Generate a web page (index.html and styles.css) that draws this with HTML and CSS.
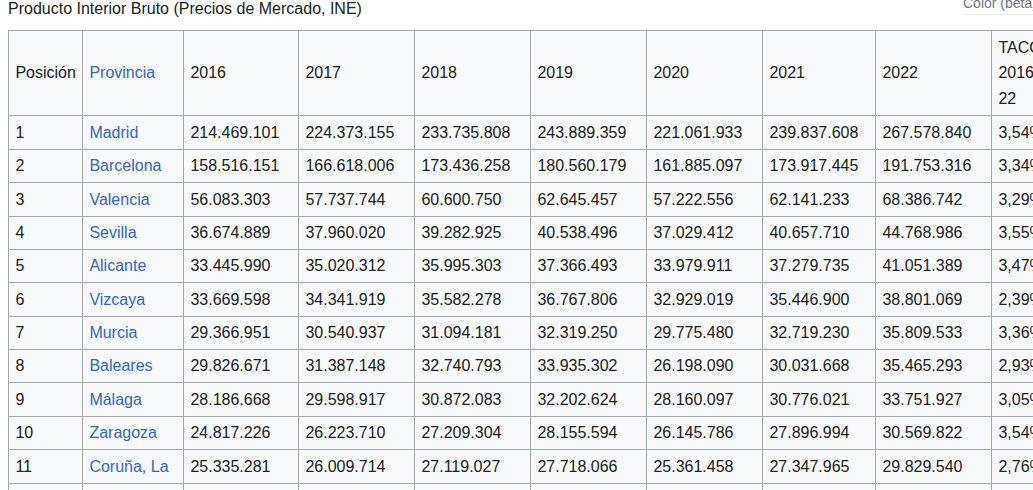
FILE: index.html
```html
<!DOCTYPE html>
<html lang="es">
<head>
<meta charset="utf-8">
<title>Producto Interior Bruto</title>
<link rel="stylesheet" href="styles.css">
</head>
<body>
<div class="topbar">
  <div class="caption">Producto Interior Bruto (Precios de Mercado, INE)</div>
  <div class="color-select">Color (beta)</div>
</div>
<table class="wikitable">
  <colgroup>
    <col class="c-pos"><col class="c-prov"><col class="c-y1"><col class="c-y"><col class="c-y"><col class="c-y"><col class="c-y"><col class="c-y2"><col class="c-y"><col class="c-tacc">
  </colgroup>
  <thead>
    <tr><th>Posición</th><th><a href="#">Provincia</a></th><th>2016</th><th>2017</th><th>2018</th><th>2019</th><th>2020</th><th>2021</th><th>2022</th><th>TACC 2016-22</th></tr>
  </thead>
  <tbody>
    <tr><td>1</td><td><a href="#">Madrid</a></td><td>214.469.101</td><td>224.373.155</td><td>233.735.808</td><td>243.889.359</td><td>221.061.933</td><td>239.837.608</td><td>267.578.840</td><td>3,54%</td></tr>
    <tr><td>2</td><td><a href="#">Barcelona</a></td><td>158.516.151</td><td>166.618.006</td><td>173.436.258</td><td>180.560.179</td><td>161.885.097</td><td>173.917.445</td><td>191.753.316</td><td>3,34%</td></tr>
    <tr><td>3</td><td><a href="#">Valencia</a></td><td>56.083.303</td><td>57.737.744</td><td>60.600.750</td><td>62.645.457</td><td>57.222.556</td><td>62.141.233</td><td>68.386.742</td><td>3,29%</td></tr>
    <tr><td>4</td><td><a href="#">Sevilla</a></td><td>36.674.889</td><td>37.960.020</td><td>39.282.925</td><td>40.538.496</td><td>37.029.412</td><td>40.657.710</td><td>44.768.986</td><td>3,55%</td></tr>
    <tr><td>5</td><td><a href="#">Alicante</a></td><td>33.445.990</td><td>35.020.312</td><td>35.995.303</td><td>37.366.493</td><td>33.979.911</td><td>37.279.735</td><td>41.051.389</td><td>3,47%</td></tr>
    <tr><td>6</td><td><a href="#">Vizcaya</a></td><td>33.669.598</td><td>34.341.919</td><td>35.582.278</td><td>36.767.806</td><td>32.929.019</td><td>35.446.900</td><td>38.801.069</td><td>2,39%</td></tr>
    <tr><td>7</td><td><a href="#">Murcia</a></td><td>29.366.951</td><td>30.540.937</td><td>31.094.181</td><td>32.319.250</td><td>29.775.480</td><td>32.719.230</td><td>35.809.533</td><td>3,36%</td></tr>
    <tr><td>8</td><td><a href="#">Baleares</a></td><td>29.826.671</td><td>31.387.148</td><td>32.740.793</td><td>33.935.302</td><td>26.198.090</td><td>30.031.668</td><td>35.465.293</td><td>2,93%</td></tr>
    <tr><td>9</td><td><a href="#">Málaga</a></td><td>28.186.668</td><td>29.598.917</td><td>30.872.083</td><td>32.202.624</td><td>28.160.097</td><td>30.776.021</td><td>33.751.927</td><td>3,05%</td></tr>
    <tr><td>10</td><td><a href="#">Zaragoza</a></td><td>24.817.226</td><td>26.223.710</td><td>27.209.304</td><td>28.155.594</td><td>26.145.786</td><td>27.896.994</td><td>30.569.822</td><td>3,54%</td></tr>
    <tr><td>11</td><td><a href="#">Coruña, La</a></td><td>25.335.281</td><td>26.009.714</td><td>27.119.027</td><td>27.718.066</td><td>25.361.458</td><td>27.347.965</td><td>29.829.540</td><td>2,76%</td></tr>
    <tr><td>&nbsp;</td><td>&nbsp;</td><td>&nbsp;</td><td>&nbsp;</td><td>&nbsp;</td><td>&nbsp;</td><td>&nbsp;</td><td>&nbsp;</td><td>&nbsp;</td><td>&nbsp;</td></tr>
  </tbody>
</table>
</body>
</html>
```
FILE: styles.css
```css
html, body {
  margin: 0;
  padding: 0;
  background: #ffffff;
  overflow: hidden;
  font-family: "Liberation Sans", Arial, sans-serif;
  color: #202122;
}

.topbar {
  display: flex;
  align-items: flex-start;
  justify-content: space-between;
  height: 30px;
  padding-left: 8px;
  width: 1033px;
  box-sizing: border-box;
}

.caption {
  font-size: 16px;
  line-height: 18px;
  margin-top: 0;
  white-space: nowrap;
}

.color-select {
  font-size: 14px;
  line-height: 17px;
  margin-top: -5px;
  margin-right: -8px;
  padding-bottom: 2px;
  width: 78px;
  color: #72777d;
  border-bottom: 1px solid #eaecf0;
  white-space: nowrap;
  overflow: hidden;
}

.wikitable {
  margin-left: 8px;
  border-collapse: collapse;
  table-layout: fixed;
  width: 1041px;
  background: #f8f9fa;
  color: #202122;
  border: 1px solid #a2a9b1;
  font-size: 16px;
  line-height: 25.6px;
}

.wikitable th,
.wikitable td {
  border: 1px solid #a2a9b1;
  padding: 3.4px 6.4px;
  text-align: left;
  vertical-align: middle;
  font-weight: normal;
}

.wikitable th {
  padding-top: 3.8px;
  padding-bottom: 3.8px;
}

.wikitable a {
  color: #3366cc;
  text-decoration: none;
}

.c-pos { width: 74px; }
.c-prov { width: 101px; }
.c-y1 { width: 115px; }
.c-y { width: 116px; }
.c-y2 { width: 113px; }
.c-tacc { width: 60px; }
```
